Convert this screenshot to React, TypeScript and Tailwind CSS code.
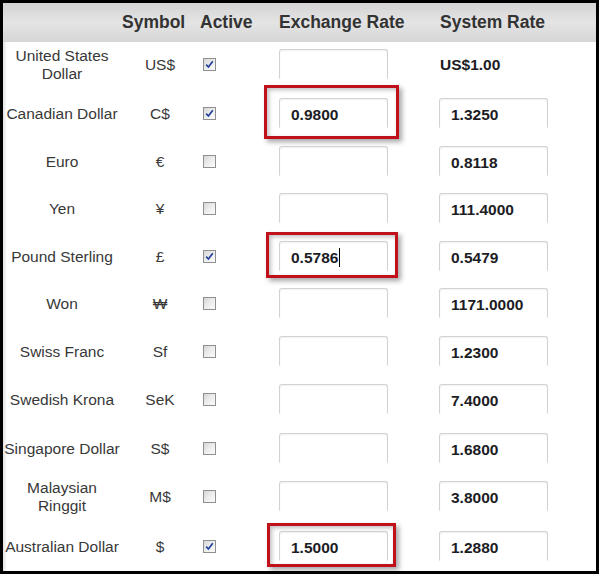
import { ReactNode } from 'react';

type Row = {
  name: string[];
  symbol: string;
  active: boolean;
  rate?: string;
  system: string;
  height: string;
  mark?: string;
  cursor?: boolean;
};

const rows: Row[] = [
  { name: ['United States', 'Dollar'], symbol: 'US$', active: true, system: 'US$1.00', height: 'h-[49px]' },
  { name: ['Canadian Dollar'], symbol: 'C$', active: true, rate: '0.9800', system: '1.3250', height: 'h-[48px]', mark: '-left-[15px] -top-[13px] -right-[11px] -bottom-[11px]' },
  { name: ['Euro'], symbol: '€', active: false, system: '0.8118', height: 'h-[47px]' },
  { name: ['Yen'], symbol: '¥', active: false, system: '111.4000', height: 'h-[48px]' },
  { name: ['Pound Sterling'], symbol: '£', active: true, rate: '0.5786', system: '0.5479', height: 'h-[47px]', mark: '-left-[13px] -top-[9px] -right-[10px] -bottom-[7px]', cursor: true },
  { name: ['Won'], symbol: '₩', active: false, system: '1171.0000', height: 'h-[48px]' },
  { name: ['Swiss Franc'], symbol: 'Sf', active: false, system: '1.2300', height: 'h-[48px]' },
  { name: ['Swedish Krona'], symbol: 'SeK', active: false, system: '7.4000', height: 'h-[49px]' },
  { name: ['Singapore Dollar'], symbol: 'S$', active: false, system: '1.6800', height: 'h-[48px]' },
  { name: ['Malaysian', 'Ringgit'], symbol: 'M$', active: false, system: '3.8000', height: 'h-[50px]' },
  { name: ['Australian Dollar'], symbol: '$', active: true, rate: '1.5000', system: '1.2880', height: 'h-[46px]', mark: '-left-[12px] -top-[8px] -right-[8px] -bottom-[6px]' },
];

function Checkbox({ checked }: { checked: boolean }) {
  return (
    <span className="flex h-[13px] w-[13px] items-center justify-center border border-[#8f9090] bg-gradient-to-br from-[#d6d6d6] via-[#ededed] to-[#fbfbfb]">
      {checked && (
        <svg width="9" height="9" viewBox="0 0 9 9">
          <path d="M1.2 4.6 L3.4 7 L7.8 1.2" fill="none" stroke="#22409b" strokeWidth="1.7" />
        </svg>
      )}
    </span>
  );
}

function RateBox({ children }: { children?: ReactNode }) {
  return (
    <div className="flex h-[30px] w-[109px] items-center rounded-t-[3px] border border-[#d2d2d2] border-b-transparent pl-[11px] pt-[3px] text-[15.5px] font-bold text-[#1c1c24] shadow-[inset_0_1px_2px_rgba(0,0,0,0.06)]">
      {children}
    </div>
  );
}

export default function App() {
  return (
    <div className="h-[577px] w-[601px] bg-white font-['Liberation_Sans',Arial,sans-serif]">
      <div className="h-[574px] w-[599px] border-[3px] border-black shadow-[inset_4px_0_3px_-2px_rgba(0,0,0,0.12)]">
        <div className="flex h-[39px] items-center bg-gradient-to-b from-[#d4d4d4] via-[#e4e4e4] to-[#d6d6d6] text-[17.5px] font-bold text-[#333]">
          <span className="w-[119px]" />
          <span className="w-[78px]">Symbol</span>
          <span className="w-[79px]">Active</span>
          <span className="w-[161px]">Exchange Rate</span>
          <span>System Rate</span>
        </div>

        {rows.map((row) => (
          <div key={row.symbol + row.name[0]} className={`flex items-start pt-[7px] text-[15.5px] text-[#383838] ${row.height}`}>
            <div className="flex h-[30px] w-[118px] flex-col items-center justify-center pt-[2px] leading-[18px]">
              {row.name.map((line) => (
                <span key={line} className="whitespace-nowrap">{line}</span>
              ))}
            </div>
            <div className="flex h-[30px] w-[78px] items-center justify-center pt-[2px]">{row.symbol}</div>
            <div className="flex h-[30px] w-[80px] items-center pl-[4px]">
              <Checkbox checked={row.active} />
            </div>
            <div className="w-[160px]">
              <div className="relative w-[109px]">
                {row.mark && (
                  <div className={`absolute border-[3px] border-[#c0101a] shadow-[3px_3px_5px_rgba(0,0,0,0.35),inset_2px_2px_4px_rgba(0,0,0,0.25)] ${row.mark}`} />
                )}
                <RateBox>
                  {row.rate}
                  {row.cursor && <span className="ml-px h-[19px] w-px bg-black" />}
                </RateBox>
              </div>
            </div>
            {row.system.startsWith('US$') ? (
              <div className="flex h-[30px] items-center pl-px pt-[1px] text-[15.5px] font-bold text-[#1c1c24]">{row.system}</div>
            ) : (
              <RateBox>{row.system}</RateBox>
            )}
          </div>
        ))}
      </div>
    </div>
  );
}
